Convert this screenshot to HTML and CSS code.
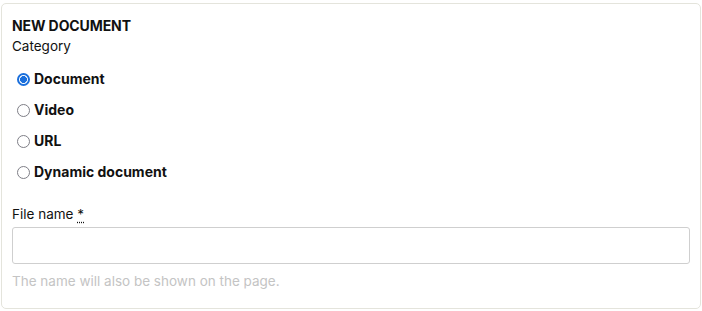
FILE: index.html
```html
<!DOCTYPE html>
<html>
<head>
<meta charset="utf-8">
<link rel="stylesheet" href="styles.css">
</head>
<body>
<div class="card">
  <div class="title">NEW DOCUMENT</div>
  <div class="label">Category</div>
  <div class="radios">
    <label class="radio"><span class="dot checked"></span><span>Document</span></label>
    <label class="radio"><span class="dot"></span><span>Video</span></label>
    <label class="radio"><span class="dot"></span><span>URL</span></label>
    <label class="radio"><span class="dot"></span><span>Dynamic document</span></label>
  </div>
  <div class="field">
    <div class="label">File name <abbr class="req" title="required">*</abbr></div>
    <div class="input"></div>
    <div class="help">The name will also be shown on the page.</div>
  </div>
</div>
</body>
</html>
```
FILE: styles.css
```css
html, body { margin: 0; padding: 0; background: #fff; }
body { font-family: Inter, "Liberation Sans", sans-serif; color: #111; font-size: 13.5px; }
.card {
  margin: 3px 1px 0 1px;
  height: 306px;
  box-sizing: border-box;
  border: 1px solid #e4e4dc;
  border-radius: 5px;
  padding: 13px 10px 0 10px;
}
.title { font-weight: 700; font-size: 14px; line-height: 18px; letter-spacing: -0.1px; }
.label { font-size: 13.5px; line-height: 18px; margin-top: 2px; }
.radios { display: flex; flex-direction: column; gap: 13px; margin-top: 15px; padding-left: 5px; }
.radio { display: flex; align-items: center; gap: 4px; font-weight: 700; font-size: 14px; line-height: 18px; }
.dot {
  width: 13px; height: 13px; box-sizing: border-box;
  border: 1.8px solid #7e7e86; border-radius: 50%;
  display: inline-block;
}
.dot.checked { border: 2px solid #1a6fdc; background: radial-gradient(circle, #1a6fdc 0 3.2px, transparent 3.7px); }
.field { margin-top: 24px; }
.field .label { margin-top: 0; }
.req { text-decoration: underline dotted; text-underline-offset: 3px; }
.input {
  margin-top: 4px;
  height: 37px; box-sizing: border-box;
  border: 1px solid #cfcfcf; border-radius: 3px;
}
.help { color: #c4c4c4; font-size: 13.5px; line-height: 18px; margin-top: 8px; }
```
